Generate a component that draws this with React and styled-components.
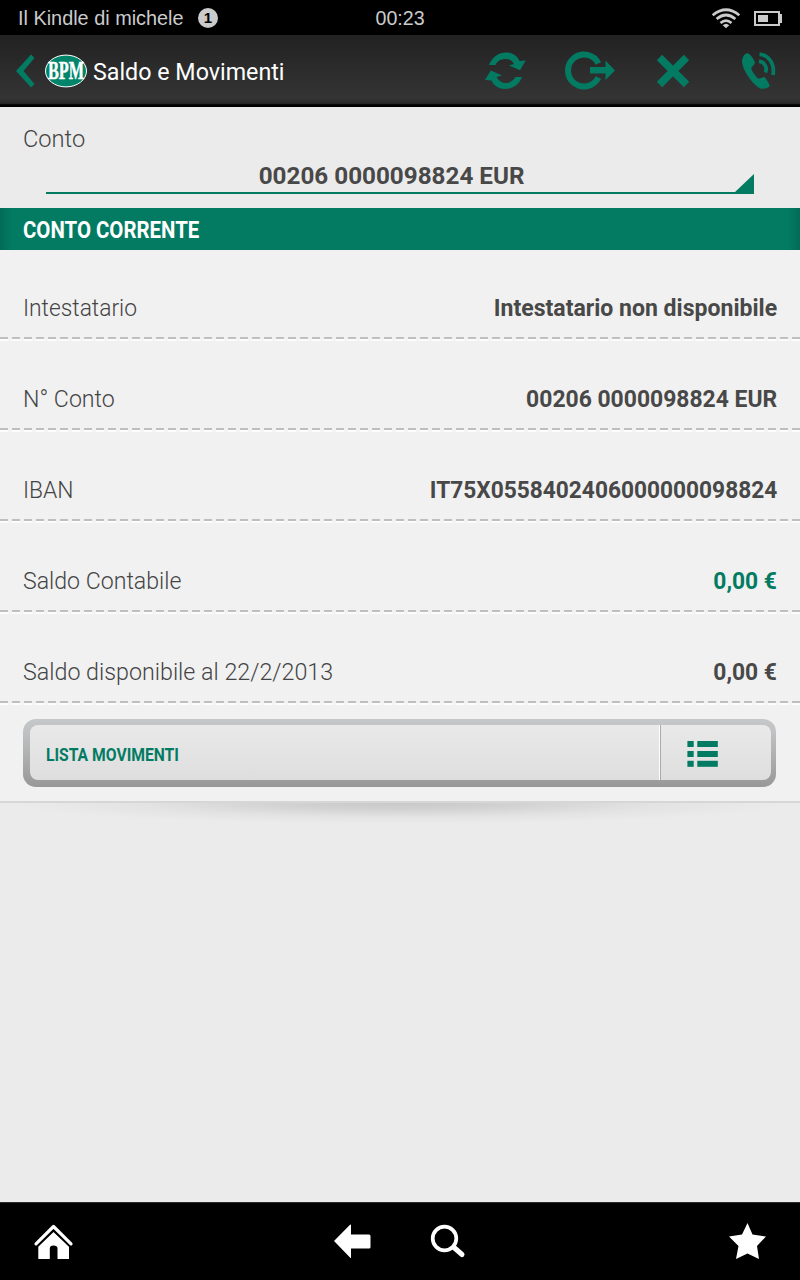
import React from 'react';
import styled, { createGlobalStyle } from 'styled-components';

const GREEN = '#037b63';

const GlobalStyle = createGlobalStyle`
  * { box-sizing: border-box; }
  body { margin: 0; background: #ebebeb; font-family: Roboto, "Liberation Sans", sans-serif; }
`;

const Screen = styled.div`
  width: 800px;
  height: 1280px;
  display: flex;
  flex-direction: column;
  overflow: hidden;
  background: #ebebeb;
`;

const StatusBar = styled.header`
  height: 35px;
  background: #000;
  color: #cbcbcb;
  display: grid;
  grid-template-columns: 1fr auto 1fr;
  align-items: center;
  padding: 0 18px 0 18px;
  font: 20px/35px "Liberation Sans", Arial, sans-serif;
`;

const DeviceInfo = styled.div`
  display: flex;
  align-items: center;
`;

const DeviceName = styled.span`
  width: 180px;
  padding-top: 1px;
  white-space: nowrap;
  transform: scaleX(0.993);
  transform-origin: left;
`;

const Badge = styled.span`
  width: 20px;
  height: 20px;
  margin-top: -1px;
  border-radius: 50%;
  background: #cbcbcb;
  color: #000;
  text-align: center;
  font: bold 15px/20px "Liberation Sans", Arial, sans-serif;
`;

const Clock = styled.span`
  padding: 1px 0 0 1px;
  transform: scaleX(0.98);
`;

const StatusIcons = styled.div`
  display: flex;
  justify-content: flex-end;
  align-items: center;
  gap: 12px;
`;

const ActionBar = styled.nav`
  height: 72px;
  padding: 0 24px 0 15px;
  display: flex;
  justify-content: space-between;
  align-items: center;
  background: linear-gradient(#222 0%, #343434 88%, #2a2a2a 95%, #000 97%, #000 100%);
`;

const TitleGroup = styled.div`
  display: flex;
  align-items: center;
  height: 72px;
`;

const Title = styled.h1`
  margin: 3px 0 0 5px;
  font-size: 23px;
  font-weight: 400;
  color: #fff;
  white-space: nowrap;
`;

const Actions = styled.div`
  display: grid;
  grid-template-columns: 80px 91px 85px 35px;
  align-items: center;
`;

const AccountPicker = styled.section`
  height: 101px;
  padding: 17px 46px 0;
`;

const Fitted = styled.span`
  display: inline-block;
  white-space: nowrap;
  transform: scaleX(${p => p.$scale});
  transform-origin: ${p => p.$origin || 'left'};
`;

const Label = styled(Fitted)`
  font-size: 24px;
  line-height: 30px;
  font-weight: 300;
  color: #444;
`;

const PickerLabel = styled(Label)`
  display: block;
  margin-left: -23px;
`;

const Spinner = styled.div`
  display: flex;
  flex-direction: column;
  align-items: center;
`;

const SpinnerValue = styled.div`
  padding: 8px 16px 0 0;
  font-size: 24px;
  line-height: 28px;
  font-weight: 700;
  color: #484848;
`;

const SpinnerRule = styled.svg`
  display: block;
  flex: none;
  margin-top: -16px;
`;

const SectionTitle = styled.h2`
  margin: 0;
  height: 42px;
  padding: 1px 23px 0;
  background: linear-gradient(90deg, #026b57, ${GREEN} 12px, ${GREEN} 788px, #026b57);
  color: #fff;
  font-size: 24px;
  line-height: 42px;
  font-weight: 700;
`;

const Details = styled.section`
  height: 553px;
  background: #f1f1f1;
  border-bottom: 2px solid #d6d6d6;
`;

const Row = styled.div`
  height: 91px;
  padding: 43px 23px 0;
  display: flex;
  justify-content: space-between;
  align-items: flex-start;
  background:
    repeating-linear-gradient(90deg, #bfbfbf 0 8px, transparent 8px 12px) 0 87px / 100% 2px no-repeat,
    repeating-linear-gradient(90deg, #fcfcfc 0 8px, #f5f5f5 8px 12px) 0 89px / 100% 2px no-repeat;
`;

const Value = styled(Fitted)`
  font-size: 24px;
  line-height: 30px;
  font-weight: 700;
  color: ${p => (p.$accent ? GREEN : '#484848')};
`;

const ListButton = styled.button`
  display: flex;
  width: 753px;
  height: 68px;
  margin: 14px 23px 0;
  padding: 6px 5px 7px 7px;
  border: 0;
  border-radius: 13px;
  background: linear-gradient(#c5c7c8 0%, #bfc1c2 20%, #989898 100%);
  text-align: left;
`;

const ButtonText = styled.span`
  width: 630px;
  padding: 2px 0 0 16px;
  border-radius: 8px 0 0 8px;
  border-right: 1px solid #fff;
  background: linear-gradient(#e9e9e9, #dedede);
  font: 700 19px/55px Roboto, sans-serif;
  color: ${GREEN};
`;

const ButtonIcon = styled.span`
  flex: 1;
  padding: 16px 0 0 26px;
  border-left: 1px solid #a9a9a9;
  border-radius: 0 8px 8px 0;
  background: linear-gradient(#e9e9e9, #dedede);
`;

const DropShadow = styled.div`
  height: 24px;
  background: radial-gradient(ellipse 390px 21px at 400px 0, rgba(0, 0, 0, 0.15), rgba(0, 0, 0, 0.11) 30%, rgba(0, 0, 0, 0.035) 66%, transparent);
`;

const NavBar = styled.footer`
  height: 78px;
  margin-top: auto;
  border-top: 1px solid #2c2c2c;
  background: #000;
  display: flex;
  justify-content: space-between;
  align-items: center;
  padding: 0 33px;
`;

const NavCenter = styled.div`
  display: flex;
  gap: 59px;
  margin-right: 4px;
`;

const WifiIcon = () => (
  <svg width="30" height="22" viewBox="0 0 30 22" fill="none" stroke="#cbcbcb" strokeWidth="2.7">
    <path d="M1.7 8.2Q15 -2.7 28.3 8.2M5.6 12Q15 4 24.4 12M9.5 16Q15 11.2 20.5 16" />
    <path d="M11.7 18.3Q15 15.3 18.3 18.3L15 21.2Z" fill="#cbcbcb" stroke="none" />
  </svg>
);

const BatteryIcon = () => (
  <svg width="29" height="17" viewBox="0 0 29 17">
    <rect x="2" y="2" width="24" height="13" fill="none" stroke="#cbcbcb" strokeWidth="2" />
    <path d="M5 5H15V12H5ZM26 4H29V13H26Z" fill="#cbcbcb" />
  </svg>
);

const BackIcon = () => (
  <svg width="20" height="34" viewBox="0 0 20 34">
    <path d="M16 .5L19.5 4L8.5 17L19.5 30L16 33.5L1 17Z" fill={GREEN} />
  </svg>
);

const LogoSvg = styled.svg`
  margin-left: 10px;
  font-family: "Liberation Serif", serif;
`;

const Logo = () => (
  <LogoSvg width="43" height="34" viewBox="0 0 43 34">
    <ellipse cx="21" cy="17" rx="20.5" ry="15.9" fill="#00856a" stroke="#fff" strokeWidth="1" />
    <text transform="translate(3 25.3) scale(.65 1)" fontWeight="700" fontSize="25" fill="#fff" stroke="#fff" strokeWidth=".5">BPM</text>
  </LogoSvg>
);

const RefreshIcon = () => (
  <svg width="41" height="38" viewBox="0 0 41 38" fill={GREEN}>
    <path d="M4 13C7 5 14 .5 21 .5C27 .5 32 3.500 34.500 9L40.800 8.500L35 18.200L24 13.500L29 12C27 8.500 24 7 20.500 7C16 7 12 9 10.500 13Z" />
    <path d="M37 25C34 33 27 37 20.500 37C14 37 9 34 6.500 28.500L0 28L5.800 18.500L17 23.500L11.500 25C14 29 17 31 20.500 31C25 31 28 29 30.500 25Z" />
  </svg>
);

const ExitIcon = () => (
  <svg width="51" height="40" viewBox="0 0 51 40">
    <path d="M33.400 12.500A16 16 0 1 0 33.400 26.500" fill="none" stroke={GREEN} strokeWidth="6" />
    <path d="M25 16H40.500V9.500L50 19.500L40.500 29V22.500H25Z" fill={GREEN} />
  </svg>
);

const CloseIcon = () => (
  <svg width="34" height="34" viewBox="0 0 34 34" stroke={GREEN} strokeWidth="7.500">
    <path d="M3.500 3.500L30.500 30.500M30.500 3.500L3.500 30.500" />
  </svg>
);

const PhoneIcon = () => (
  <svg width="35" height="38" viewBox="0 0 35 38">
    <path d="M5.500 1.500C3 2 1 6 1 10C2 19 11 31 17.500 35.500C21 38 27 36.500 28.700 34C29 33 25.500 27 23.800 25.200C22.500 24 18.500 27.500 17.300 26.600C15 25 10.500 18.500 10.300 16.500C10 14.800 14 12.500 13.800 10.500C13.300 8 10 3 8 2C7.300 1.300 6.500 1.200 5.500 1.500Z" fill={GREEN} />
    <path d="M18.500 2.300C27 2.500 34 11 32 23M18 9.200C23.500 10 26.500 15 24.500 20.500" fill="none" stroke={GREEN} strokeWidth="3.700" />
  </svg>
);

const ListIcon = () => (
  <svg width="31" height="27" viewBox="0 0 31 27" fill={GREEN}>
    {[0, 10, 19.8].map(y => (
      <React.Fragment key={y}>
        <rect x=".4" y={y} width="6.300" height="6" />
        <rect x="10.300" y={y} width="20.500" height="6" />
      </React.Fragment>
    ))}
  </svg>
);

const HomeIcon = () => (
  <svg width="41" height="36" viewBox="0 0 41 36" fill="#fff">
    <path d="M5.300 35V22.500L20.500 8L36 22.500V35H24.500V24.500Q24.500 21.500 20.500 21.500Q16.800 21.500 16.800 24.500V35Z" />
    <path d="M3 20.300L20.500 3L38 20.300" fill="none" stroke="#000" strokeWidth="6.500" />
    <path d="M3 19.800L20.500 2.500L38 19.800" fill="none" stroke="#fff" strokeWidth="3.200" strokeLinecap="round" strokeLinejoin="round" />
  </svg>
);

const LeftIcon = () => (
  <svg width="37" height="35" viewBox="0 0 37 35">
    <path d="M0 17L16 .8Q17 0 17 1V10.500H35Q36.500 10.500 36.500 12V23Q36.500 24.500 35 24.500H17V33.500Q17 34.500 16 33.500Z" fill="#fff" />
  </svg>
);

const SearchIcon = () => (
  <svg width="36" height="35" viewBox="0 0 36 35" fill="none" stroke="#fff">
    <circle cx="14.500" cy="14.500" r="11.800" strokeWidth="3.700" />
    <path d="M24 23.500L32 30.500" strokeWidth="5" strokeLinecap="round" />
  </svg>
);

const StarIcon = () => (
  <svg width="38" height="38" viewBox="0 0 38 38">
    <path d="M18.500 0L23.500 11.500L37 13.500L28 23L30 36L18.500 30.500L7 36L9.500 23L0 13.500L13 11.500Z" fill="#fff" />
  </svg>
);

const rows = [
  { label: 'Intestatario', labelScale: 0.95, value: 'Intestatario non disponibile', valueScale: 0.96 },
  { label: 'N° Conto', labelScale: 0.965, value: '00206 0000098824 EUR', valueScale: 0.954 },
  { label: 'IBAN', labelScale: 0.95, value: 'IT75X0558402406000000098824', valueScale: 0.946 },
  { label: 'Saldo Contabile', labelScale: 0.963, value: '0,00 €', valueScale: 0.95, accent: true },
  { label: 'Saldo disponibile al 22/2/2013', labelScale: 0.969, value: '0,00 €', valueScale: 0.95 },
];

export default function App() {
  return (
    <Screen>
      <GlobalStyle />
      <StatusBar>
        <DeviceInfo>
          <DeviceName>Il Kindle di michele</DeviceName>
          <Badge>1</Badge>
        </DeviceInfo>
        <Clock>00:23</Clock>
        <StatusIcons><WifiIcon /><BatteryIcon /></StatusIcons>
      </StatusBar>
      <ActionBar>
        <TitleGroup>
          <BackIcon />
          <Logo />
          <Title><Fitted $scale={1.011}>Saldo e Movimenti</Fitted></Title>
        </TitleGroup>
        <Actions><RefreshIcon /><ExitIcon /><CloseIcon /><PhoneIcon /></Actions>
      </ActionBar>
      <AccountPicker>
        <PickerLabel $scale={0.985}>Conto</PickerLabel>
        <Spinner>
          <SpinnerValue><Fitted $scale={1.01} $origin="center">00206 0000098824 EUR</Fitted></SpinnerValue>
          <SpinnerRule width="708" height="20" viewBox="0 0 708 20">
            <path d="M0 18H689L708 0V20H0Z" fill={GREEN} />
          </SpinnerRule>
        </Spinner>
      </AccountPicker>
      <SectionTitle><Fitted $scale={0.85}>CONTO CORRENTE</Fitted></SectionTitle>
      <Details>
        {rows.map(r => (
          <Row key={r.label}>
            <Label $scale={r.labelScale}>{r.label}</Label>
            <Value as="strong" $accent={r.accent} $scale={r.valueScale} $origin="right">{r.value}</Value>
          </Row>
        ))}
        <ListButton>
          <ButtonText><Fitted $scale={0.825}>LISTA MOVIMENTI</Fitted></ButtonText>
          <ButtonIcon><ListIcon /></ButtonIcon>
        </ListButton>
      </Details>
      <DropShadow />
      <NavBar>
        <HomeIcon />
        <NavCenter><LeftIcon /><SearchIcon /></NavCenter>
        <StarIcon />
      </NavBar>
    </Screen>
  );
}
